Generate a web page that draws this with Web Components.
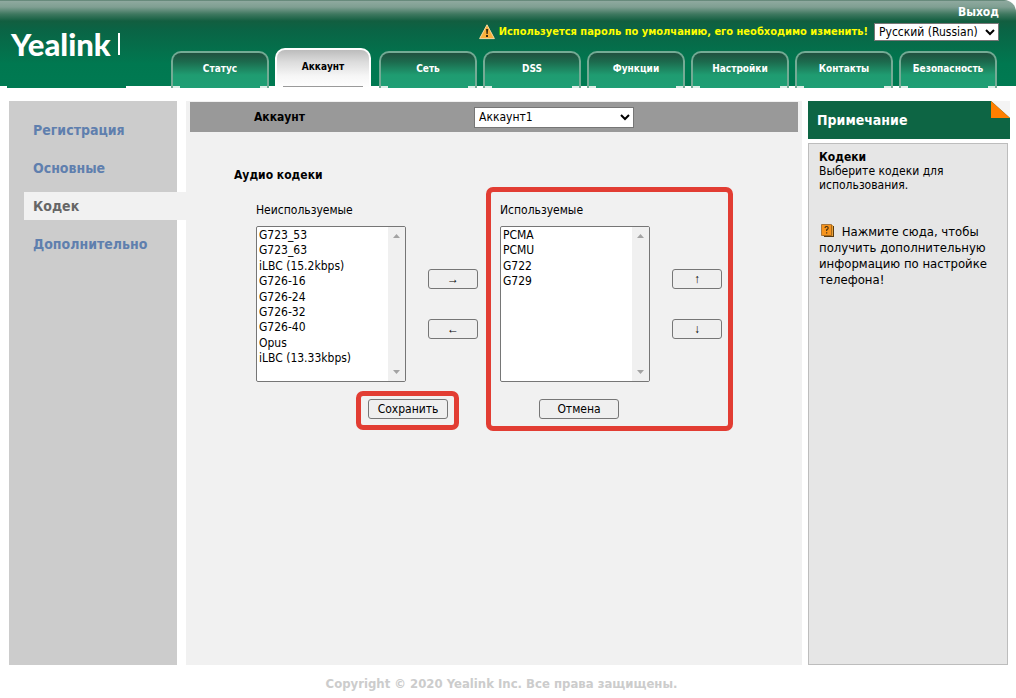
<!DOCTYPE html>
<html lang="ru">
<head>
<meta charset="utf-8">
<title>Yealink</title>
<style>
  body { margin: 0; background: #fff; color: #000; font: 12px/16px "DejaVu Sans Condensed", "Noto Sans", sans-serif; }
</style>
</head>
<body>
<phone-admin></phone-admin>

<script>
const define = (name, html, init) => customElements.define(name, class extends HTMLElement {
  constructor() {
    super();
    const t = document.createElement('template');
    t.innerHTML = html;
    this.attachShadow({ mode: 'open' }).append(t.content.cloneNode(true));
  }
  connectedCallback() { if (init) init.call(this, this.shadowRoot); }
});

define('nav-tab', `
<style>
  :host { display: block; width: 98px; }
  a { position: relative; display: block; box-sizing: border-box; height: 37px; padding-top: 8px; border: 2px solid #74ab95; border-bottom: 0;
      border-radius: 10px 10px 0 0; background: linear-gradient(#20503f, #1c6b4e 9px, #1f9c71 22px, #1f9f75);
      color: #fff; font-weight: bold; font-size: 10px; line-height: 16px; text-align: center; text-decoration: none; }
  a::after { content: ""; position: absolute; left: 0; right: 0; bottom: 0; height: 2px;
      background: linear-gradient(90deg, #dfeee8 7px, transparent 7px calc(100% - 7px), #dfeee8 calc(100% - 7px)); }
  :host([current]) a { height: 40px; margin-right: 2px; padding-top: 9px; border-color: #fff; color: #000; background: linear-gradient(#bcbcbc, #dcdcdc 12px, #f6f6f6 26px, #fff); }
  :host([current]) a::after { left: 6px; right: 6px; height: 1px; bottom: 1px; background: #9a9a9a; }
</style>
<a href="#"><slot></slot></a>`);

define('site-header', `
<style>
  :host { display: flex; justify-content: space-between; height: 88px; border-top-right-radius: 12px; color: #fff;
    background: linear-gradient(90deg, #fff 7px, #007a52 7px 126px, #fff 126px) 0 100% / 100% 2px no-repeat,
      linear-gradient(#3f6b58 0, #8fa99f 1px, #7f9f92 7px, #3f7860 14px, #125e40 21px, #0a6445 30px, #007850 64px, #007a52); }
  .brand { display: flex; align-items: center; gap: 7px; height: 22px; padding: 33px 0 0 11px; font: 900 31px/22px Lato, sans-serif; }
  .bar { width: 2px; height: 22px; background: #fff; }
  .side { display: flex; flex-direction: column; align-items: flex-end; padding-right: 17px; }
  .out { margin-top: 4px; color: #fff; font-weight: bold; font-size: 12px; text-decoration: none; }
  .row { display: flex; align-items: center; gap: 4px; height: 18px; margin-top: 3px; }
  .warn { color: #ff0; font-weight: bold; font-size: 11px; }
  select { width: 125px; height: 18px; margin-left: 2px; padding: 0; border: 1px solid #767676; border-radius: 0; background-color: #fff; color: #000; font-family: inherit; font-size: 12px; }
  nav { display: flex; align-items: flex-end; gap: 6px; height: 40px; margin-top: 7px; padding-right: 2px; }
</style>
<div class="brand">Yealink<span class="bar"></span></div>
<div class="side">
  <a class="out" href="#">Выход</a>
  <div class="row">
    <svg width="16" height="16" viewBox="0 0 16 16"><path d="M8 .8 15.4 14.6H.6Z" fill="#fbb03b" stroke="#f7d9a0" stroke-width="1" stroke-linejoin="round"/><path d="M7 5h2.2l-.5 5H7.5z" fill="#3b2a10"/><rect x="7" y="11" width="2" height="2" fill="#3b2a10"/></svg>
    <span class="warn">Используется пароль по умолчанию, его необходимо изменить!</span>
    <select aria-label="Язык"><option>Русский (Russian)</option></select>
  </div>
  <nav>
    <nav-tab>Статус</nav-tab><nav-tab current>Аккаунт</nav-tab><nav-tab>Сеть</nav-tab><nav-tab>DSS</nav-tab>
    <nav-tab>Функции</nav-tab><nav-tab>Настройки</nav-tab><nav-tab>Контакты</nav-tab><nav-tab>Безопасность</nav-tab>
  </nav>
</div>`);

define('side-item', `
<style>
  :host { display: block; }
  a { display: block; padding-left: 9px; font-weight: bold; font-size: 14px; line-height: 28px; color: #5f7fae; text-decoration: none; }
  :host([current]) a { margin-right: -9px; background: #f1f1f1; color: #666; }
</style>
<a href="#"><slot></slot></a>`);

define('side-menu', `
<style>
  :host { display: flex; flex-direction: column; gap: 10px; padding: 15px 0 0 15px; background: #ccc; }
</style>
<slot></slot>`);

define('codec-list', `
<style>
  :host { position: relative; display: block; --indent: 0px; }
  label { display: block; }
  .body { display: flex; gap: 22px; margin-top: 8px; }
  .box { display: flex; box-sizing: border-box; width: 150px; height: 156px; border: 1px solid #767676; border-radius: 2px; background: #fff; overflow: hidden; }
  select { flex: 1; min-width: 0; padding: 1px 0 0; border: 0; outline: 0; background: #fff; color: #000; font-family: inherit; font-size: 12px; scrollbar-width: none; }
  option { padding: 0 2px 1px; }
  .rail { display: flex; flex-direction: column; justify-content: space-between; align-items: center; width: 17px; padding: 7px 0; box-sizing: border-box; background: #f0f0f0; }
  .keys { display: flex; flex-direction: column; gap: 30px; padding-top: 43px; }
  button { box-sizing: border-box; height: 20px; padding: 0; border: 1px solid #767676; border-radius: 3px; background: #efefef; color: #000; font-family: inherit; font-size: 12px; line-height: 18px; }
  .keys button { width: 50px; font-family: "Liberation Sans", sans-serif; }
  .act { position: relative; width: 80px; margin: 17px 0 0 var(--indent); }
  .act button { display: block; width: 80px; }
  :host([framed])::after, :host([framed-action]) .act::after { content: ""; position: absolute; border: 5px solid #e23d33; border-radius: 7px; pointer-events: none; }
  :host([framed])::after { inset: -15px -11px -12px -14px; }
  :host([framed-action]) .act::after { inset: -8px -11px -11px -12px; }
</style>
<label for="list"></label>
<div class="body">
  <div class="box">
    <select id="list" multiple></select>
    <div class="rail">
      <svg width="7" height="4" viewBox="0 0 7 4"><path d="M0 4 3.5 0 7 4z" fill="#a3a3a3"/></svg>
      <svg width="7" height="4" viewBox="0 0 7 4"><path d="M0 0 3.5 4 7 0z" fill="#a3a3a3"/></svg>
    </div>
  </div>
  <div class="keys"><button type="button"></button><button type="button"></button></div>
</div>
<div class="act"><button type="button"></button></div>`, function (root) {
  root.querySelector('label').textContent = this.getAttribute('label');
  root.querySelector('select').replaceChildren(...this.getAttribute('items').split('|').map(t => new Option(t)));
  const keys = this.getAttribute('keys').split('|');
  root.querySelectorAll('.keys button').forEach((b, i) => { b.textContent = keys[i]; });
  root.querySelector('.act button').textContent = this.getAttribute('action');
});

define('codec-panel', `
<style>
  :host { display: block; background: #f1f1f1; }
  .bar { display: flex; align-items: center; height: 30px; margin: 1px 4px 0; background: #999; }
  .bar label { width: 220px; padding-left: 64px; font-weight: bold; }
  .bar select { width: 160px; height: 21px; padding: 0; border: 1px solid #767676; border-radius: 0; background-color: #fff; color: #000; font-family: inherit; font-size: 12px; }
  h2 { margin: 35px 0 0 48px; font-size: 12px; line-height: 16px; }
  .lists { display: flex; gap: 22px; margin: 19px 0 0 70px; }
  codec-list:first-child { --indent: 112px; }
  codec-list:last-child { --indent: 39px; }
</style>
<div class="bar"><label for="acc">Аккаунт</label><select id="acc"><option>Аккаунт1</option></select></div>
<h2>Аудио кодеки</h2>
<div class="lists">
  <codec-list framed-action label="Неиспользуемые" keys="→|←" action="Сохранить" items="G723_53|G723_63|iLBC (15.2kbps)|G726-16|G726-24|G726-32|G726-40|Opus|iLBC (13.33kbps)"></codec-list>
  <codec-list framed label="Используемые" keys="↑|↓" action="Отмена" items="PCMA|PCMU|G722|G729"></codec-list>
</div>`);

define('note-panel', `
<style>
  :host { display: flex; flex-direction: column; gap: 4px; }
  h2 { position: relative; margin: 0; padding-left: 9px; background: #0d6544; color: #fff; font-size: 14px; line-height: 38px; }
  h2 svg { position: absolute; top: 0; right: 0; }
  .body { flex: 1; margin-right: 2px; padding: 6px 10px; border: 1px solid #bdbdbd; background: #e6e6e6; }
  h3, p { margin: 0; font-size: 12px; line-height: 14px; }
  a { display: block; margin-top: 32px; color: #000; font-size: 13px; line-height: 16px; text-decoration: none; }
  a svg { margin: 0 3px 0 2px; vertical-align: -2px; }
</style>
<h2>Примечание<svg width="19" height="17" viewBox="0 0 19 17"><path d="M0 0H19V17z" fill="#f4f4f4"/><path d="M0 0V17H19z" fill="#ff7f00"/></svg></h2>
<div class="body">
  <h3>Кодеки</h3>
  <p>Выберите кодеки для использования.</p>
  <a href="#"><svg width="14" height="14" viewBox="0 0 14 14"><path d="M3 2h10v11H3z" fill="#5a3b12"/><path d="M2 1h10v11H2z" fill="#e8a23a"/><path d="M.5.5h10v11h-10z" fill="#f7941d" stroke="#7a4a10" stroke-width=".6"/><path d="M4 4q0-1.500 1.600-1.500T7.200 4q0 1-1.500 1.800V7M5.700 8.200v1.200" fill="none" stroke="#3b2a10" stroke-width="1.100"/></svg> Нажмите сюда, чтобы получить дополнительную информацию по настройке телефона!</a>
</div>`);

define('phone-admin', `
<style>
  :host { display: flex; flex-direction: column; min-height: 100vh; }
  main { flex: 1; display: grid; grid-template-columns: 168px 1fr 202px; padding: 13px 6px 0 9px; }
  codec-panel { margin: 0 6px 0 9px; }
  side-menu { z-index: 1; }
  footer { padding: 11px 13px 6px 0; color: #ccc; font-weight: bold; font-size: 13px; line-height: 16px; text-align: center; }
</style>
<site-header></site-header>
<main>
  <side-menu>
    <side-item>Регистрация</side-item><side-item>Основные</side-item><side-item current>Кодек</side-item><side-item>Дополнительно</side-item>
  </side-menu>
  <codec-panel></codec-panel>
  <note-panel></note-panel>
</main>
<footer>Copyright © 2020 Yealink Inc. Все права защищены.</footer>`);
</script>
</body>
</html>
